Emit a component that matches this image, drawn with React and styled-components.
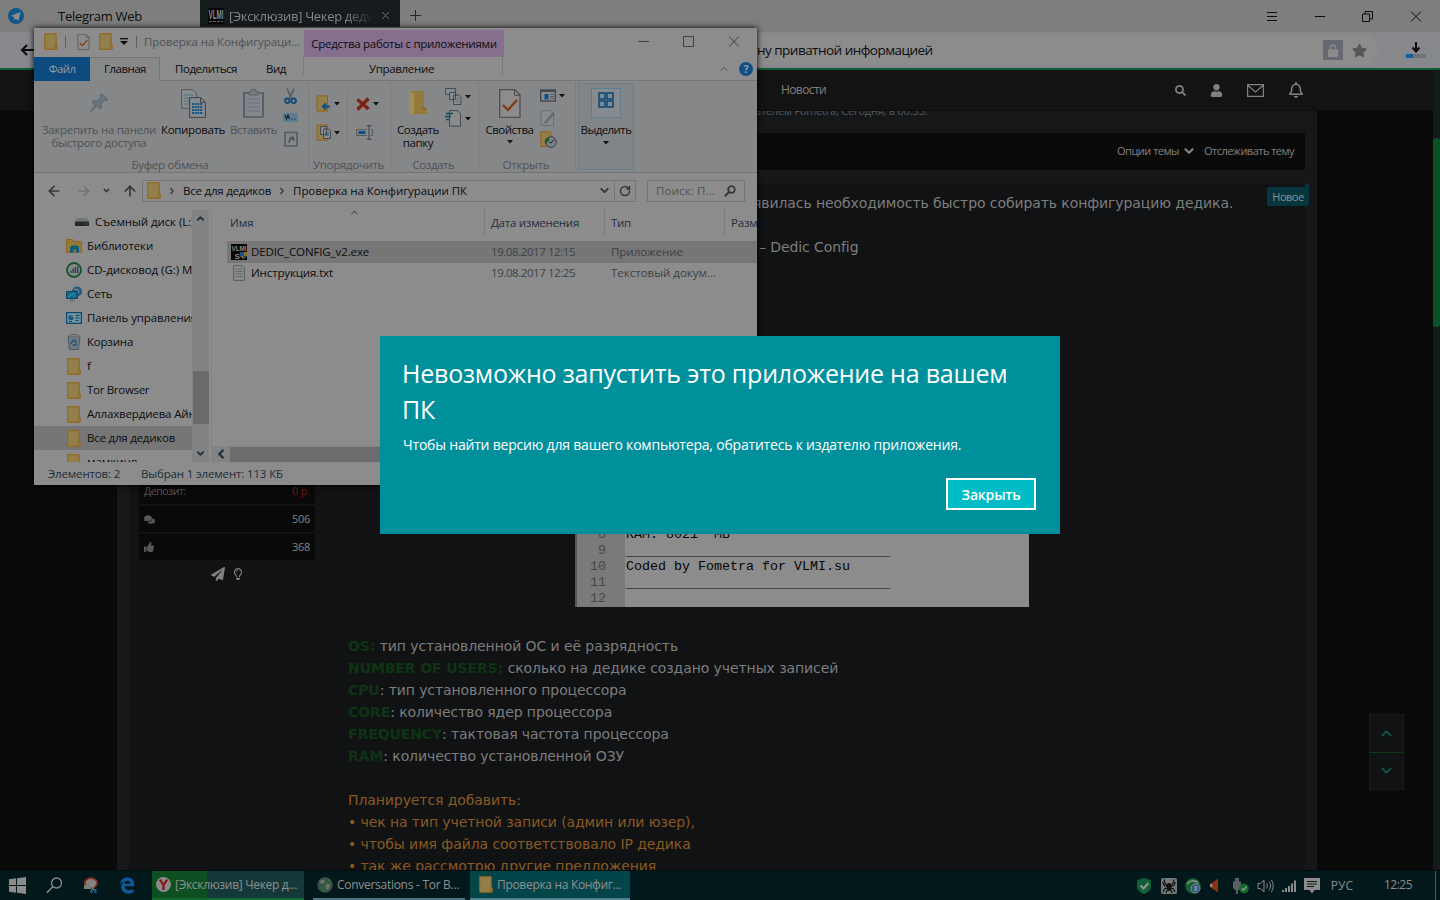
import React from "react";
import styled, { createGlobalStyle } from "styled-components";
import { FaComments, FaPaperPlane, FaRegBell, FaRegLightbulb, FaSearch, FaStar, FaThumbsUp, FaUser } from "react-icons/fa";
import { ArrowLeft, ArrowRight, ArrowUp, ChevronDown, ChevronLeft, ChevronRight, ChevronUp, Plus, RotateCw, X } from "lucide-react";

const GlobalStyle = createGlobalStyle`
  * {
    box-sizing: border-box;
  }
  body {
    margin: 0;
    background: #0a0a0a;
    font-family: "Open Sans", "Noto Sans", sans-serif;
    overflow: hidden;
  }
  svg {
    display: block;
    flex-shrink: 0;
  }
`;

const Desktop = styled.div`
  position: relative;
  width: 1440px;
  height: 900px;
  overflow: hidden;
  display: flex;
  flex-direction: column;
`;

const Text = styled.span`
  display: block;
  flex-shrink: 0;
  white-space: nowrap;
  font-size: ${(p) => p.$size || 11.5}px;
  line-height: ${(p) => p.$lh || 16}px;
  letter-spacing: ${(p) => p.$ls || 0}px;
  font-weight: ${(p) => p.$weight || 400};
  color: ${(p) => p.$color || "#0b0d0f"};
`;

/* ---------- browser ---------- */

const TabBar = styled.div`
  height: 32px;
  flex-shrink: 0;
  background: #7e7e7e;
  display: flex;
  align-items: flex-start;
`;

const PinnedTab = styled.div`
  width: 200px;
  height: 32px;
  display: flex;
  align-items: center;
  padding-left: 8px;
  gap: 34px;
`;

const ActiveTab = styled.div`
  width: 200px;
  height: 27px;
  background: #161b1d;
  border-bottom: 1px solid #1f2a35;
  display: flex;
  align-items: center;
  padding: 5px 8px 0;
  gap: 5px;
`;

const TabTitle = styled.div`
  width: 147px;
  overflow: hidden;
  mask-image: linear-gradient(to right, #000 80%, transparent);
`;

const NewTab = styled.div`
  padding: 7px 7px;
`;

const WindowButtons = styled.div`
  margin-left: auto;
  height: 32px;
  display: flex;
  align-items: center;
  gap: 32px;
  padding-right: 14px;
`;

const Toolbar = styled.div`
  height: 36px;
  flex-shrink: 0;
  background: #86888b;
  display: flex;
  align-items: center;
  padding: 0 14px 0 20px;
`;

const Address = styled.div`
  margin-left: 22px;
  width: 1324px;
  height: 30px;
  background: #8c8c8c;
  display: flex;
  align-items: center;
  justify-content: flex-end;
  clip-path: polygon(0 0, 99.3% 0, 100% 50%, 99.3% 100%, 0 100%);
  padding-right: 13px;
`;

const AddressText = styled.div`
  width: 566px;
`;

const Lock = styled.div`
  width: 20px;
  height: 20px;
  background: #666a70;
  display: flex;
  align-items: center;
  justify-content: center;
  margin-right: 9px;
`;

const Download = styled.div`
  margin-left: auto;
`;

const Page = styled.div`
  flex: 1;
  display: flex;
  border-top: 2px solid #0d5c33;
  overflow: hidden;
`;

const PageMain = styled.div`
  width: 1433px;
  display: flex;
  flex-direction: column;
`;

const PageScroll = styled.div`
  width: 7px;
  background: #14191b;
  padding-top: 68px;
`;

const PageThumb = styled.div`
  height: 189px;
  border-radius: 3px;
  background: #0b5229;
`;

const SiteHeader = styled.div`
  height: 41px;
  flex-shrink: 0;
  background: #131313;
  border-bottom: 1px solid #0d0d0d;
  display: flex;
  align-items: center;
  padding: 0 129px 0 781px;
`;

const HeaderIcons = styled.div`
  margin-left: auto;
  display: flex;
  align-items: center;
  gap: 24px;
  color: #808080;
`;

const Content = styled.div`
  width: 1200px;
  height: 800px;
  margin-left: 117px;
  padding: 0 12px;
  background: #161719;
  overflow: hidden;
`;

const SubTitle = styled.div`
  height: 22px;
  padding-left: 626px;
  margin-top: -8px;
  margin-bottom: 8px;
`;

const ThreadBar = styled.div`
  height: 37px;
  background: #0a0a0a;
  display: flex;
  align-items: center;
  justify-content: flex-end;
  gap: 3px;
  padding: 0 11px 2px 0;
`;

const Post = styled.div`
  margin-top: 12px;
  height: 720px;
  background: #111214;
  border-top: 1px solid #17191b;
  display: flex;
  padding-left: 10px;
`;

const UserColumn = styled.div`
  width: 176px;
  padding-top: 295px;
  display: flex;
  flex-direction: column;
  gap: 2px;
`;

const Stat = styled.div`
  height: 26px;
  flex-shrink: 0;
  background: #090909;
  display: flex;
  align-items: center;
  justify-content: space-between;
  padding: 0 5px;
  color: #55585a;
`;

const UserActions = styled.div`
  display: flex;
  align-items: center;
  gap: 7px;
  padding: 5px 0 0 72px;
  color: #808080;
`;

const Message = styled.div`
  width: 980px;
  padding: 9px 0 0 33px;
`;

const Line = styled.div`
  height: 22px;
  padding-left: ${(p) => p.$indent || 0}px;
  font-family: "DejaVu Sans", sans-serif;
  font-size: 14px;
  line-height: 22px;
  letter-spacing: -0.09px;
  white-space: nowrap;
  color: ${(p) => p.$color || "#7d7d7d"};

  b {
    color: #0e3513;
  }
`;

const Editor = styled.div`
  width: 454px;
  height: 81px;
  margin: 268px 0 28px 227px;
  padding-top: 1px;
  background: linear-gradient(to right, #555 0 2px, #7a7a7a 2px 50px, #8c8c8c 50px);
  overflow: hidden;
`;

const CodeRow = styled.div`
  display: flex;
  height: 16px;
  font: 13.33px/16px "Liberation Mono", monospace;
  white-space: pre;
  color: #050505;
`;

const LineNo = styled.span`
  width: 51px;
  padding-right: 20px;
  text-align: right;
  color: #484848;
`;

const CodeRule = styled.b`
  padding-top: 1px;
`;

const NewBadge = styled.div`
  position: absolute;
  left: 1267px;
  top: 187px;
  width: 42px;
  height: 19px;
  background: #07363f;
  border-radius: 2px 0 2px 2px;
  display: flex;
  align-items: center;
  justify-content: center;

  &::before {
    content: "";
    position: absolute;
    right: 0;
    top: -3px;
    width: 4px;
    height: 3px;
    background: #06323a;
  }
`;

const ScrollJump = styled.div`
  position: absolute;
  left: 1369px;
  top: 714px;
  width: 35px;
  height: 76px;
  background: #111213;
  border: 1px solid #171c1e;
  display: flex;
  flex-direction: column;
  color: #13534f;

  div {
    flex: 1;
    display: flex;
    align-items: center;
    justify-content: center;
  }
  div + div {
    border-top: 1px solid #0d3b16;
  }
`;

/* ---------- explorer ---------- */

const Explorer = styled.div`
  position: absolute;
  left: 34px;
  top: 28px;
  width: 723px;
  height: 457px;
  background: #8c8c8c;
  overflow: hidden;
  display: flex;
  flex-direction: column;
  box-shadow: 0 0 6px #000;
`;

const TitleRow = styled.div`
  height: 29px;
  flex-shrink: 0;
  display: flex;
  align-items: center;
  padding: 0 0 2px 10px;
`;

const Divider = styled.div`
  width: 1px;
  height: 12px;
  background: #5f5f5f;
  margin: 0 ${(p) => p.$right}px 0 ${(p) => p.$left}px;
`;

const Spacer = styled.div`
  width: ${(p) => p.$w}px;
  flex-shrink: 0;
`;

const TitleText = styled.div`
  width: 160px;
`;

const ToolsTab = styled.div`
  width: 200px;
  height: 27px;
  margin-bottom: -2px;
  align-self: flex-end;
  background: #866e8e;
  display: flex;
  align-items: center;
  justify-content: center;
`;

const Controls = styled.div`
  margin-left: auto;
  display: flex;
  align-items: center;
  gap: 34px;
  padding-right: 17px;
`;

const RibbonTabs = styled.div`
  height: 24px;
  flex-shrink: 0;
  display: flex;
  border-bottom: 1px solid #747576;
`;

const RibbonTab = styled.div`
  width: ${(p) => p.$w}px;
  height: 24px;
  flex-shrink: 0;
  display: flex;
  align-items: center;
  justify-content: center;
  background: ${(p) => (p.$file ? "#0d4a80" : p.$active ? "#87888a" : "transparent")};
  border: 1px solid transparent;
  border-color: ${(p) => (p.$active ? "#747576 #747576 transparent transparent" : "transparent")};
`;

const ToolsSubTab = styled(RibbonTab)`
  margin-left: 3px;
  height: 18px;
  padding: 6px 3px 0 0;
  border-color: transparent #7b777d;
`;

const RibbonHelp = styled.div`
  margin-left: auto;
  display: flex;
  align-items: center;
  gap: 9px;
  padding-right: 4px;
`;

const Ribbon = styled.div`
  height: 92px;
  flex-shrink: 0;
  display: flex;
  padding-top: 2px;
  background: #868789;
  border-bottom: 1px solid #737475;
`;

const Group = styled.div`
  width: ${(p) => p.$w}px;
  height: 86px;
  flex-shrink: 0;
  display: flex;
  flex-direction: column;
  border-right: 1px solid #7a7b7d;
`;

const GroupBody = styled.div`
  height: 72px;
  flex-shrink: 0;
  display: flex;
`;

const GroupLabel = styled.div`
  display: flex;
  justify-content: center;
  padding: 2px 2px 0 0;
`;

const BigButton = styled.div`
  width: ${(p) => p.$w}px;
  flex-shrink: 0;
  display: flex;
  flex-direction: column;
  align-items: center;
`;

const BigIcon = styled.div`
  height: 40px;
  display: flex;
  align-items: center;
`;

const Column = styled.div`
  width: ${(p) => p.$w}px;
  flex-shrink: 0;
  padding-top: ${(p) => p.$top || 3}px;
  display: flex;
  flex-direction: column;
  align-items: ${(p) => (p.$start ? "flex-start" : "center")};
  gap: ${(p) => p.$gap || 3}px;
`;

const IconDrop = styled.div`
  height: 19px;
  display: flex;
  align-items: center;
  gap: 3px;
`;

const InnerLine = styled.div`
  width: 1px;
  height: 54px;
  margin-top: 7px;
  background: #7a7b7d;
`;

const SelectGroup = styled.div`
  width: 56px;
  height: 87px;
  margin-left: 2px;
  background: #828588;
  border: 1px solid #6d7e88;
  display: flex;
  flex-direction: column;
  align-items: center;
`;

const SelectTile = styled.div`
  width: 30px;
  height: 30px;
  margin: 4px 0;
  padding-top: 3px;
  border: 1px solid #5e7f90;
  background: #878b8d;
  display: flex;
  justify-content: center;
`;

const NavRow = styled.div`
  height: 37px;
  flex-shrink: 0;
  display: flex;
  align-items: center;
  padding: 0 0 2px 12px;
  color: #35383b;
`;

const NavArrows = styled.div`
  width: 96px;
  display: flex;
  align-items: center;
`;

const Box = styled.div`
  width: ${(p) => p.$w}px;
  height: 22px;
  border: 1px solid #757575;
  display: flex;
  align-items: center;
  padding-left: ${(p) => p.$pad}px;
  margin-right: ${(p) => p.$mr || 0}px;
`;

const Crumb = styled.div`
  display: flex;
  align-items: center;
  gap: 6px;
  margin-left: 6px;
`;

const BoxEnd = styled.div`
  margin-left: auto;
`;

const RefreshBox = styled.div`
  width: 21px;
  height: 20px;
  margin-left: 3px;
  border-left: 1px solid #757575;
  display: flex;
  align-items: center;
  justify-content: center;
`;

const Body = styled.div`
  height: 252px;
  flex-shrink: 0;
  display: flex;
`;

const Tree = styled.div`
  width: 158px;
  overflow: hidden;
`;

const TreeRow = styled.div`
  height: 24px;
  display: flex;
  align-items: center;
  padding-left: ${(p) => p.$pad || 32}px;
  gap: ${(p) => p.$gap || 5}px;
  background: ${(p) => (p.$selected ? "#767676" : "transparent")};
`;

const VScroll = styled.div`
  width: 17px;
  background: #828384;
  display: flex;
  flex-direction: column;
  align-items: center;
  justify-content: space-between;
  padding: 3px 0;
  color: #22303a;
`;

const VThumb = styled.div`
  width: 16px;
  height: 53px;
  margin-top: 123px;
  background: #696a6b;
`;

const Files = styled.div`
  flex: 1;
  margin-left: 2px;
  border-left: 1px solid #858585;
  display: flex;
  flex-direction: column;
  overflow: hidden;
`;

const Columns = styled.div`
  flex-shrink: 0;
  height: ${(p) => p.$h}px;
  margin-left: 15px;
  margin-bottom: ${(p) => p.$mb || 0}px;
  display: grid;
  grid-template-columns: 258px 120px 120px 33px;
  align-items: center;
  background: ${(p) => (p.$selected ? "#767676" : "transparent")};
`;

const Cell = styled.div`
  display: flex;
  align-items: center;
  gap: ${(p) => p.$gap || 4}px;
  padding-left: ${(p) => p.$pad || 6}px;
  height: 100%;
  border-right: ${(p) => (p.$line ? "1px solid #7b7b7b" : "none")};
  overflow: hidden;
`;

const SortMark = styled.div`
  position: absolute;
  left: 315px;
  top: 179px;
  color: #4b5257;
`;

const HScroll = styled.div`
  margin-top: auto;
  height: 16px;
  background: #828384;
  display: flex;
  align-items: center;
  padding-left: 2px;
  color: #22303a;
`;

const HThumb = styled.div`
  flex: 1;
  height: 15px;
  margin-left: 2px;
  background: #6b6c6d;
`;

const Status = styled.div`
  flex: 1;
  display: flex;
  align-items: center;
  padding-left: 14px;
  gap: 21px;
`;

/* ---------- dialog ---------- */

const Dialog = styled.div`
  position: absolute;
  left: 380px;
  top: 336px;
  width: 680px;
  height: 198px;
  padding: 19px 24px 24px 22px;
  background: #00909c;
  display: flex;
  flex-direction: column;
`;

const DialogTitle = styled.div`
  font-size: 25px;
  line-height: 36px;
  letter-spacing: -0.22px;
  color: #fff;
`;

const DialogBody = styled(Text)`
  padding-left: 1px;
`;

const CloseButton = styled.button`
  width: 90px;
  height: 32px;
  padding: 1px 0 0;
  margin-top: auto;
  align-self: flex-end;
  background: #00bcc7;
  border: 2px solid #fff;
  font: 600 14px/20px "Open Sans", sans-serif;
  letter-spacing: -0.18px;
  color: #fff;
`;

/* ---------- taskbar ---------- */

const Taskbar = styled.div`
  position: absolute;
  left: 0;
  right: 0;
  bottom: 0;
  height: 30px;
  background: #02181b;
  border-top: 1px solid #010d0f;
  display: flex;
  align-items: center;
`;

const Launchers = styled.div`
  width: 152px;
  display: flex;
  align-items: center;
  gap: 20px;
  padding-left: 9px;
`;

const Task = styled.div`
  width: ${(p) => p.$w}px;
  height: 29px;
  margin-right: ${(p) => p.$mr || 0}px;
  background: ${(p) => p.$bg || "transparent"};
  border-bottom: 2px solid ${(p) => p.$line};
  display: flex;
  align-items: center;
  gap: 4px;
  padding-left: ${(p) => p.$pad || 4}px;
`;

const Tray = styled.div`
  margin-left: auto;
  display: flex;
  align-items: center;
  gap: 8px;
  height: 29px;
`;

const Clock = styled.div`
  margin: 0 15px 0 23px;
  padding-bottom: 2px;
`;

const ShowDesktop = styled.div`
  width: 5px;
  height: 29px;
  border-left: 1px solid #4c5c5e;
`;

/* ---------- icons ---------- */

const Folder = () => (
  <svg width="14" height="17" viewBox="0 0 14 17">
    <path d="M.7.700h11.500v10.800h1v4.800H.7z" fill="#927f4a" stroke="#94631d" />
    <path d="M11 16v-4.500h1.500" fill="none" stroke="#94631d" />
  </svg>
);

const Drop = () => (
  <svg width="6" height="4" viewBox="0 0 6 4"><path d="M0 0h6L3 3.5z" fill="#101214" /></svg>
);

const CheckSheet = ({ w, h }) => (
  <svg width={w} height={h} viewBox="0 0 22 29">
    <path d="M.7.7h15L21 6v22.300H.7z" fill="#8c8c8c" stroke="#4c4f52" strokeWidth="1.3" />
    <path d="M15.500 1v5.300H21" fill="none" stroke="#4c4f52" />
    <path d="M4 16l5 5 9-10" fill="none" stroke="#85370f" strokeWidth="2.200" />
  </svg>
);

const Telegram = () => (
  <svg width="16" height="16" viewBox="0 0 16 16">
    <circle cx="8" cy="8" r="8" fill="#12568a" />
    <path d="M3.300 7.800l9.200-3.700-2 8.600-2.600-2-1.500 1.500-.3-2.600z" fill="#8b8f92" />
  </svg>
);

const Vlmi = ({ shield }) => (
  <svg width="16" height="16" viewBox="0 0 16 16">
    <rect width="16" height="16" fill="#050505" />
    <text x="8" y={shield ? 6.5 : 11} textAnchor="middle" fontSize={shield ? 7 : 13} fontWeight="700" fontFamily="Liberation Sans" textLength="15" lengthAdjust="spacingAndGlyphs" fill="#8c8c8c">VLMI</text>
    {shield ? (
      <>
        <text x="3.500" y="14.500" fontSize="8" fontWeight="700" fontFamily="Liberation Sans" fill="#8c8c8c">S</text>
        <path d="M9 8h3.500v4H9z" fill="#165489" /><path d="M12.500 8H16v4h-3.500z" fill="#8f6f20" />
        <path d="M9 12h3.500v3.500z" fill="#8f6f20" /><path d="M12.500 12H16l-3.500 3.500z" fill="#165489" />
      </>
    ) : (
      <path d="M1 13.500h14" stroke="#666" strokeDasharray="3 1" />
    )}
  </svg>
);

const Pin = () => (
  <svg width="22" height="22" viewBox="0 0 22 22">
    <path d="M13.500 1.500l6.500 6-2 1.300-1.800-.3-3.200 4 .5 3.500-1.800 1-3-3.300L2 20.500l5-7.300-3-3 1.300-1.500 3.500.3 3.700-3.500-.2-2.500z" fill="#68747d" stroke="#566069" strokeWidth=".8" />
  </svg>
);

const CopyBig = () => (
  <svg width="25" height="29" viewBox="0 0 25 29">
    <path d="M.6.6h11l4 4v14.800H.6z" fill="#898c8e" stroke="#54585b" />
    <path d="M3 6h9M3 9h9M3 12h9M3 15h6" stroke="#4f7489" />
    <path d="M8.600 8.600h11l4.800 4.500v15.300H8.600z" fill="#898c8e" stroke="#3c4247" />
    <path d="M19.500 9v4.300h4.500" fill="none" stroke="#3c4247" />
    <path d="M11 15h11M11 18h11M11 21h11M11 24h11" stroke="#12568a" strokeWidth="1.800" strokeDasharray="2 .7" />
  </svg>
);

const Clipboard = () => (
  <svg width="21" height="29" viewBox="0 0 21 29">
    <path d="M1 4h19v24H1z" fill="#84888d" stroke="#525a61" strokeWidth="1.700" />
    <path d="M6 2.500h2.500V.5h4v2H15v3.500H6z" fill="#777c80" stroke="#596066" />
    <path d="M4 10h13M4 14h13M4 18h13M4 22h13" stroke="#66717f" />
  </svg>
);

const PasteLink = () => (
  <svg width="14" height="17" viewBox="0 0 14 17">
    <path d="M1 2.500h12v13.500H1z" fill="#84888d" stroke="#54585c" strokeWidth="1.500" />
    <path d="M4 1h6v3H4z" fill="#6a6f73" />
    <path d="M5 13c0-3 1-4.500 4-5M6 7.500h3.500V11" fill="none" stroke="#4a4f54" strokeWidth="1.400" />
  </svg>
);

const Scissors = () => (
  <svg width="13" height="17" viewBox="0 0 13 17">
    <path d="M3 .5l4.500 10M10 .5l-4.500 10" stroke="#53585c" strokeWidth="1.500" />
    <circle cx="3.300" cy="12.800" r="2.300" fill="none" stroke="#0d4b7c" strokeWidth="1.800" />
    <circle cx="9.700" cy="12.800" r="2.300" fill="none" stroke="#0d4b7c" strokeWidth="1.800" />
  </svg>
);

const PathIcon = () => (
  <svg width="15" height="9" viewBox="0 0 15 9">
    <rect width="15" height="9" fill="#5b7f90" />
    <path d="M2 2l1.500 4L5 2l1.500 4M8.500 6h1.200M11.500 6h1.200" fill="none" stroke="#15222c" strokeWidth="1.200" />
  </svg>
);

const FolderMove = () => (
  <svg width="15" height="17" viewBox="0 0 15 17">
    <path d="M1 .8h10.500v15.400H1z" fill="#927f4a" stroke="#94631d" />
    <path d="M14 11.500H7.500M10 8.500l-3.200 3 3.200 3" fill="none" stroke="#0d4f8a" strokeWidth="2" />
  </svg>
);

const FolderCopy = () => (
  <svg width="15" height="17" viewBox="0 0 15 17">
    <path d="M1 .8h10.500v15.400H1z" fill="#927f4a" stroke="#94631d" />
    <path d="M4.500 2.500h6v8h-6zM7.500 5h5l2 2v7.500h-7z" fill="#8a8c8e" stroke="#45494d" />
    <path d="M9 9h4M9 11h4" stroke="#12568a" />
  </svg>
);

const RedCross = () => (
  <svg width="14" height="14" viewBox="0 0 14 14">
    <path d="M1.500 2.500l11 9.500M12.500 1.500l-11 11" stroke="#7d2215" strokeWidth="3.400" />
  </svg>
);

const Rename = () => (
  <svg width="17" height="15" viewBox="0 0 17 15">
    <path d="M11 4.500H.6v6H11M14.500 4.500h2v6h-2" fill="none" stroke="#54585b" />
    <path d="M2.500 6h7v3h-7z" fill="#0d4f8a" />
    <path d="M10.500.7h5M13 .7v13.600M10.500 14.300h5" stroke="#3c4247" />
  </svg>
);

const NewFolder = () => (
  <svg width="20" height="28" viewBox="0 0 20 28">
    <path d="M1 2h15v16l3 1.500V25H5v2.500L1 24z" fill="#94793c" />
    <path d="M1 2l5 3v22.500L1 24z" fill="#a08f5b" />
    <path d="M14 18l4 2" stroke="#7a5a22" />
  </svg>
);

const NewItem = () => (
  <svg width="17" height="17" viewBox="0 0 17 17">
    <path d="M.6.6h10v6H.6z" fill="#80909a" stroke="#45494d" />
    <path d="M4.500 4.500h6v7h-6zM8.500 7h5l2.500 2.500v7H8.500z" fill="#898b8d" stroke="#45494d" />
    <path d="M10.500 11h4M10.500 13.500h4" stroke="#4f7489" />
  </svg>
);

const EasyAccess = () => (
  <svg width="17" height="17" viewBox="0 0 17 17">
    <path d="M4.500.6h8l3 3v12.600h-11z" fill="#898b8d" stroke="#45494d" />
    <path d="M1 3.500h7M0 6.500h6M1 9.500h3" stroke="#0f4a56" strokeWidth="1.400" />
  </svg>
);

const OpenIcon = () => (
  <svg width="16" height="13" viewBox="0 0 16 13">
    <path d="M.7 1h14.600v11H.7z" fill="#8a8c8e" stroke="#45494d" strokeWidth="1.400" />
    <path d="M.7 2h14.600" stroke="#45494d" strokeWidth="2" />
    <path d="M4.500 5h4v5.500h-4z" fill="#0d4f8a" />
    <path d="M10 5.500h4M10 7.500h4M10 9.500h4" stroke="#54585b" />
  </svg>
);

const EditIcon = () => (
  <svg width="15" height="16" viewBox="0 0 15 16">
    <path d="M1 .6h9L13.500 4v11.400H1z" fill="#868b90" stroke="#666e75" />
    <path d="M5 13L14 3" stroke="#5b6871" strokeWidth="2.200" />
  </svg>
);

const History = () => (
  <svg width="17" height="17" viewBox="0 0 17 17">
    <path d="M.8.8h10v14.500H.8z" fill="#927f4a" stroke="#94631d" />
    <circle cx="11" cy="11" r="5.300" fill="#7b8186" stroke="#3c4247" />
    <path d="M5 13a6 6 0 0 1 3.500-7l1 3z" fill="#15592d" />
    <path d="M9 11l2 1 3-3.500" fill="none" stroke="#24282b" />
  </svg>
);

const SelectAll = () => (
  <svg width="16" height="16" viewBox="0 0 16 16">
    <path d="M1 1h6v6H1zM9 1h6v6H9zM1 9h6v6H1zM9 9h6v6H9z" fill="#7b8b95" stroke="#0d4573" strokeWidth="1.500" />
  </svg>
);

const Drive = () => (
  <svg width="14" height="8" viewBox="0 0 14 8">
    <path d="M2 0h10l2 3.500H0z" fill="#74777a" />
    <path d="M0 3.500h14V8H0z" fill="#24282c" />
    <path d="M10 6h2" stroke="#218046" />
  </svg>
);

const Libraries = () => (
  <svg width="16" height="14" viewBox="0 0 16 14">
    <path d="M.5.500h6l1 2h8v11H.5z" fill="#937a38" stroke="#94631d" />
    <path d="M4 13.500V9.500a3 3 0 0 1 3-3h3a3 3 0 0 1 3 3v4h-3v-3H7.500v3z" fill="#0c5d80" />
  </svg>
);

const Disc = () => (
  <svg width="16" height="16" viewBox="0 0 16 16">
    <circle cx="8" cy="8" r="7" fill="#858a88" stroke="#16532c" strokeWidth="1.800" />
    <path d="M5 11V8.500M7.200 11V6.500M9.400 11V5M11.600 11V4.500" stroke="#26425c" strokeWidth="1.400" />
  </svg>
);

const Network = () => (
  <svg width="16" height="16" viewBox="0 0 16 16">
    <circle cx="11" cy="5.500" r="5" fill="#285877" />
    <path d="M8 3l4 1 1 3" stroke="#7c979f" fill="none" />
    <path d="M.5 5.500h11v7H.5z" fill="#126c92" stroke="#0b455f" />
    <path d="M2 11l6-4" stroke="#5a93a5" />
    <path d="M4 15h5M6 13v2" stroke="#62686b" />
  </svg>
);

const Panel = () => (
  <svg width="16" height="12" viewBox="0 0 16 12">
    <path d="M.6.6h14.800v10.800H.6z" fill="#6f96a4" stroke="#0d4a6e" strokeWidth="1.300" />
    <circle cx="5" cy="5.500" r="2.600" fill="#12568a" />
    <path d="M5 5.500V2.900a2.600 2.600 0 0 1 2.600 2.600z" fill="#93701e" />
    <path d="M9.500 3.500h4M9.500 6h4M3 9.500h3M9.500 8.500h3" stroke="#123f60" strokeWidth="1.200" />
  </svg>
);

const Bin = () => (
  <svg width="14" height="16" viewBox="0 0 14 16">
    <path d="M1 2.500h12L11.500 15.500h-9z" fill="#73787c" stroke="#53585c" />
    <path d="M1 2.500l3-2h6l3 2" fill="#808487" stroke="#62676b" />
    <path d="M7 5.500l2.500 3.500M10 11H5.500M4 10l2-4" stroke="#12568a" strokeWidth="1.600" />
  </svg>
);

const TextFile = () => (
  <svg width="12" height="16" viewBox="0 0 12 16">
    <path d="M.6.6H9l2.400 2.400v12.400H.6z" fill="#8a8b8c" stroke="#5b5e60" />
    <path d="M2.500 4h7M2.500 6.500h7M2.500 9h7M2.500 11.500h7" stroke="#5f6a73" />
  </svg>
);

const Windows = () => (
  <svg width="17" height="17" viewBox="0 0 17 17">
    <path d="M0 2.300l7-1V8H0zM8 1.200L17 0v8H8zM0 9h7v6.700l-7-1zM8 9h9v8l-9-1.300z" fill="#8c8c8c" />
  </svg>
);

const TaskSearch = () => (
  <svg width="17" height="17" viewBox="0 0 17 17">
    <circle cx="10.500" cy="6" r="5" fill="none" stroke="#8c8c8c" strokeWidth="1.300" />
    <path d="M6.800 9.700L.8 15.700" stroke="#8c8c8c" strokeWidth="1.500" />
  </svg>
);

const Snip = () => (
  <svg width="16" height="17" viewBox="0 0 16 17">
    <ellipse cx="8" cy="6" rx="6.300" ry="4.800" fill="#85807e" stroke="#812a1c" strokeWidth="1.800" />
    <path d="M1 8h7v4H1z" fill="#7c7c7c" />
    <path d="M8 6l3 8M12 7l-4 7" stroke="#8c8c8c" />
    <path d="M8.500 13v3M12.500 12v4" stroke="#13609b" strokeWidth="2" />
  </svg>
);

const Edge = () => (
  <svg width="16" height="17" viewBox="0 0 16 17">
    <path d="M.8 7.500C1.500 2.800 4.800.5 8.500.5c4.500 0 6.700 3.200 6.700 7v1.800H5.500c.2 2.600 2.200 3.900 4.700 3.900 1.700 0 3.200-.5 4.300-1.200v3.300c-1.300.8-3 1.200-5 1.200-4.500 0-7.300-2.600-7.300-6.500 0-2.600 1.500-4.700 3.700-5.800C3.500 4.800 1.800 5.900.8 7.500zM5.500 6.800h5.800c0-1.900-1-3-2.700-3S5.700 5 5.500 6.800z" fill="#105a9a" />
  </svg>
);

const Yandex = () => (
  <svg width="15" height="15" viewBox="0 0 15 15">
    <circle cx="7.500" cy="7.500" r="7.500" fill="#8b8b8b" />
    <path d="M3.800 2.500l3.700 5.500 3.700-5.500M7.500 7.500v5.500" fill="none" stroke="#851515" strokeWidth="2.200" />
  </svg>
);

const TorGlobe = () => (
  <svg width="16" height="16" viewBox="0 0 16 16">
    <circle cx="8" cy="8" r="7.700" fill="#3b5145" />
    <path d="M3 4c2-2 4-1 5 0s-2 3-3 3-2-1-2-3zM9 7c2-1 4 0 4 2s-2 4-3 4-2-4-1-6z" fill="#65755f" />
    <path d="M4 10l3 4M11 2l2 3" stroke="#1f7a35" strokeWidth="1.500" />
  </svg>
);

const ShieldOk = () => (
  <svg width="16" height="16" viewBox="0 0 16 16">
    <path d="M0 2l7-2 7 2v6c0 4-3 6.500-7 8-4-1.500-7-4-7-8z" fill="#155f38" />
    <path d="M3.500 7.500l3 3 5-5.500" fill="none" stroke="#8c9a90" strokeWidth="2" />
  </svg>
);

const Spider = () => (
  <svg width="16" height="16" viewBox="0 0 16 16">
    <rect width="16" height="16" rx="2" fill="#747879" />
    <ellipse cx="8" cy="9" rx="2.500" ry="4" fill="#0d1112" />
    <path d="M3 1.500l1 4 4 3 4-3 1-4M1.500 4l2 4h9l2-4M2 14l1.500-3L8 9.500l4.500 1.500 1.500 3M5 15l1-3M11 15l-1-3" fill="none" stroke="#0d1112" strokeWidth="1.200" />
  </svg>
);

const Globe8 = () => (
  <svg width="16" height="16" viewBox="0 0 16 16">
    <circle cx="8" cy="8" r="7.800" fill="#17612f" />
    <path d="M2 6c3-4 8-4 11-1" stroke="#768b80" strokeWidth="2" fill="none" />
    <circle cx="10.500" cy="10.500" r="4.500" fill="#26548a" stroke="#8a8f92" />
    <text x="8.500" y="13.300" fontSize="7" fontWeight="700" fontFamily="Liberation Sans" fill="#9a9a9a">8</text>
  </svg>
);

const RedHorn = () => (
  <svg width="16" height="15" viewBox="0 0 16 15">
    <path d="M1 6l8-5.500v14L1 9z" fill="#8e2f12" />
    <path d="M1 6h2.500v3H1z" fill="#888" />
  </svg>
);

const Usb = () => (
  <svg width="16" height="16" viewBox="0 0 16 16">
    <path d="M2 0h4v3.500H2zM0 3.500h8V10L6 12H2L0 10z" fill="#5b6163" />
    <path d="M4 12v4" stroke="#5b6163" strokeWidth="2" />
    <circle cx="11" cy="10.500" r="4.800" fill="#166a2c" />
    <path d="M8.800 10.500l1.700 1.700 3-3.700" fill="none" stroke="#8d988f" strokeWidth="1.300" />
  </svg>
);

const Volume = () => (
  <svg width="17" height="14" viewBox="0 0 17 14">
    <path d="M1 4.500h2.500l3.500-3.300v11.600L3.500 9.500H1z" fill="none" stroke="#8c8c8c" />
    <path d="M9.500 4.500c1 1.500 1 3.500 0 5M12 2.500c2 3 2 6 0 9M14.300.8c2.500 4 2.500 8.400 0 12.400" fill="none" stroke="#8c8c8c" />
  </svg>
);

const Signal = () => (
  <svg width="14" height="12" viewBox="0 0 14 12">
    <path d="M1 12v-2M4 12V8M7 12V6M10 12V3.500M13 12V.5" stroke="#8c8c8c" strokeWidth="2" />
  </svg>
);

const Notice = () => (
  <svg width="16" height="16" viewBox="0 0 16 16">
    <path d="M0 0h16v12h-5.500L8 15.500 5.500 12H0z" fill="#8c8c8c" />
    <path d="M3 3.500h10M3 6h10M3 8.500h7" stroke="#02181b" />
  </svg>
);

/* ---------- data ---------- */

const tree = [
  { name: "Библиотеки", icon: <Libraries />, ls: -0.1 },
  { name: "CD-дисковод (G:) MegaFon", icon: <Disc />, ls: -0.05 },
  { name: "Сеть", icon: <Network />, ls: -0.1 },
  { name: "Панель управления", icon: <Panel />, ls: -0.1 },
  { name: "Корзина", icon: <Bin />, ls: -0.2, pad: 33, gap: 6 },
  { name: "f", folder: true },
  { name: "Tor Browser", folder: true, ls: -0.3 },
  { name: "Аллахвердиева Айнур", folder: true, ls: -0.15 },
  { name: "Все для дедиков", folder: true, ls: -0.22, selected: true },
  { name: "мамкино", folder: true },
];

const specs = [
  ["OS:", " тип установленной ОС и её разрядность"],
  ["NUMBER OF USERS:", " сколько на дедике создано учетных записей"],
  ["CPU", ": тип установленного процессора"],
  ["CORE", ": количество ядер процессора"],
  ["FREQUENCY", ": тактовая частота процессора"],
  ["RAM", ": количество установленной ОЗУ"],
];

const plans = [
  "Планируется добавить:",
  "• чек на тип учетной записи (админ или юзер),",
  "• чтобы имя файла соответствовало IP дедика",
  "• так же рассмотрю другие предложения",
];

const rule = "_".repeat(33);
const code = [
  [8, "RAM: 8021  MB"],
  [9, rule],
  [10, "Coded by Fometra for VLMI.su"],
  [11, rule],
  [12, ""],
];

const muted = "#4e5255";

const BrowserWindow = () => (
  <>
    <TabBar>
      <PinnedTab>
        <Telegram />
        <Text $size={13} $ls={-0.28} $lh={18}>Telegram Web</Text>
      </PinnedTab>
      <ActiveTab>
        <Vlmi />
        <TabTitle>
          <Text $size={13} $ls={-0.32} $lh={18} $color="#858789">[Эксклюзив] Чекер дедика</Text>
        </TabTitle>
        <X size={13} strokeWidth={1.8} color="#6d747a" />
      </ActiveTab>
      <NewTab><Plus size={17} strokeWidth={1.4} color="#20262c" /></NewTab>
      <WindowButtons>
        <svg width="12" height="11"><path d="M1 1.500h10M1 5.500h10M1 9.500h10" stroke="#0c0c0c" /></svg>
        <svg width="20" height="11" viewBox="-5 0 20 11"><path d="M0 5.500h10" stroke="#0c0c0c" /></svg>
        <svg width="12" height="11" viewBox="0 0 12 11"><path d="M.5 3h7v7.500h-7zM3 3V.5h7.500V8H8" fill="none" stroke="#0c0c0c" /></svg>
        <svg width="20" height="11" viewBox="-5 0 20 11"><path d="M0 .500l10 10M10 .5l-10 10" stroke="#0c0c0c" /></svg>
      </WindowButtons>
    </TabBar>
    <Toolbar>
      <svg width="14" height="12" viewBox="0 0 14 12"><path d="M14 6H2M7 1L2 6l5 5" fill="none" stroke="#0a0a0a" strokeWidth="2" /></svg>
      <Address>
        <AddressText>
          <Text $size={13.5} $ls={-0.52} $lh={20}>ну приватной информацией</Text>
        </AddressText>
        <Lock>
          <svg width="10" height="13" viewBox="0 0 10 13"><path d="M0 5.500h10V13H0z" fill="#8b8b8b" /><path d="M2.500 6V3.500a2.500 2.500 0 0 1 5 0V6" fill="none" stroke="#8b8b8b" strokeWidth="1.300" /></svg>
        </Lock>
        <FaStar size={15} color="#53585d" />
      </Address>
      <Download>
        <svg width="20" height="17" viewBox="0 0 20 17"><path d="M10 0v8M6.500 5.500L10 9.500l3.500-4" fill="none" stroke="#0b0b0b" strokeWidth="2" /><path d="M0 12h7v4H0z" fill="#125f9c" /><path d="M7 12h13v4H7z" fill="#6c747b" /></svg>
      </Download>
    </Toolbar>
    <Page>
      <PageMain>
        <SiteHeader>
          <Text $size={12} $ls={-0.6} $color="#808080">Новости</Text>
          <HeaderIcons>
            <FaSearch size={11} />
            <FaUser size={13} />
            <svg width="17" height="13" viewBox="0 0 17 13"><path d="M.6.6h15.800v11.800H.6zM1 1.500l7.500 6.500L16 1.500" fill="none" stroke="currentColor" strokeWidth="1.200" /></svg>
            <FaRegBell size={16} />
          </HeaderIcons>
        </SiteHeader>
        <Content>
          <SubTitle>
            <Text $size={11} $ls={-0.22} $color="#55575a">ателем Fometra, Сегодня, в 00:35.</Text>
          </SubTitle>
          <ThreadBar>
            <Text $size={11} $ls={-0.5} $color="#808080">Опции темы</Text>
            <ChevronDown size={14} strokeWidth={4} color="#808080" />
            <Spacer $w={2} />
            <Text $size={11} $ls={-0.53} $color="#808080">Отслеживать тему</Text>
          </ThreadBar>
          <Post>
            <UserColumn>
              <Stat>
                <Text $size={10.5} $ls={-0.45} $color="#56585a">Депозит:</Text>
                <Text $size={10.5} $color="#731b17">0 р.</Text>
              </Stat>
              <Stat>
                <FaComments size={11} />
                <Text $size={11} $ls={-0.29} $color="#858585">506</Text>
              </Stat>
              <Stat>
                <FaThumbsUp size={10} />
                <Text $size={11} $ls={-0.29} $color="#858585">368</Text>
              </Stat>
              <UserActions>
                <FaPaperPlane size={14} />
                <FaRegLightbulb size={12} />
              </UserActions>
            </UserColumn>
            <Message>
              <Line $indent={405}>явилась необходимость быстро собирать конфигурацию дедика.</Line>
              <Line />
              <Line $indent={411}>– Dedic Config</Line>
              <Editor>
                {code.map(([no, text]) => (
                  <CodeRow key={no}>
                    <LineNo>{no}</LineNo>
                    {text === rule ? <CodeRule>{text}</CodeRule> : text}
                  </CodeRow>
                ))}
              </Editor>
              {specs.map(([key, text]) => (
                <Line key={key}><b>{key}</b>{text}</Line>
              ))}
              <Line />
              {plans.map((text) => (
                <Line key={text} $color="#8a5a22">{text}</Line>
              ))}
            </Message>
          </Post>
        </Content>
      </PageMain>
      <PageScroll><PageThumb /></PageScroll>
    </Page>
    <NewBadge><Text $size={11} $ls={-0.5} $color="#8b8f90">Новое</Text></NewBadge>
    <ScrollJump>
      <div><ChevronUp size={17} strokeWidth={2.5} /></div>
      <div><ChevronDown size={17} strokeWidth={2.5} /></div>
    </ScrollJump>
  </>
);

const ExplorerWindow = () => (
  <Explorer>
    <TitleRow>
      <Folder />
      <Divider $left={7} $right={11} />
      <CheckSheet w={13} h={16} />
      <Spacer $w={9} />
      <Folder />
      <Spacer $w={7} />
      <svg width="8" height="7" viewBox="0 0 8 7"><path d="M0 .7h8" stroke="#0c0c0c" strokeWidth="1.300" /><path d="M0 3h8L4 7z" fill="#0c0c0c" /></svg>
      <Divider $left={8} $right={7} />
      <TitleText><Text $ls={-0.11} $color={muted}>Проверка на Конфигураци...</Text></TitleText>
      <ToolsTab><Text $ls={-0.28}>Средства работы с приложениями</Text></ToolsTab>
      <Controls>
        <svg width="11" height="11"><path d="M0 5.500h11" stroke="#404040" /></svg>
        <svg width="11" height="11"><path d="M.5.500h10v10H.5z" fill="none" stroke="#404040" /></svg>
        <svg width="12" height="11"><path d="M1 .500l10 10M11 .5l-10 10" stroke="#404040" /></svg>
      </Controls>
    </TitleRow>
    <RibbonTabs>
      <RibbonTab $w={56} $file><Text $ls={-0.6} $color="#8f9aa3">Файл</Text></RibbonTab>
      <RibbonTab $w={70} $active><Text $ls={-0.52}>Главная</Text></RibbonTab>
      <RibbonTab $w={92}><Text $ls={-0.43}>Поделиться</Text></RibbonTab>
      <RibbonTab $w={48}><Text $ls={-0.45}>Вид</Text></RibbonTab>
      <ToolsSubTab $w={200}><Text $ls={-0.33}>Управление</Text></ToolsSubTab>
      <RibbonHelp>
        <ChevronUp size={12} color="#4b4f52" />
        <svg width="14" height="14" viewBox="0 0 14 14"><circle cx="7" cy="7" r="7" fill="#0e4f88" /><text x="7" y="11" textAnchor="middle" fontSize="11" fontWeight="700" fontFamily="Open Sans" fill="#8f9aa3">?</text></svg>
      </RibbonHelp>
    </RibbonTabs>
    <Ribbon>
      <Group $w={275}>
        <GroupBody>
          <BigButton $w={130}>
            <BigIcon><Pin /></BigIcon>
            <Text $lh={13} $ls={-0.31} $color={muted}>Закрепить на панели</Text>
            <Text $lh={13} $ls={-0.26} $color={muted}>быстрого доступа</Text>
          </BigButton>
          <BigButton $w={58}>
            <BigIcon><CopyBig /></BigIcon>
            <Text $lh={13} $ls={-0.35}>Копировать</Text>
          </BigButton>
          <BigButton $w={63}>
            <BigIcon><Clipboard /></BigIcon>
            <Text $lh={13} $ls={-0.48} $color={muted}>Вставить</Text>
          </BigButton>
          <Column $w={11} $top={5} $gap={8}>
            <Scissors />
            <PathIcon />
            <PasteLink />
          </Column>
        </GroupBody>
        <GroupLabel><Text $ls={-0.23} $color={muted}>Буфер обмена</Text></GroupLabel>
      </Group>
      <Group $w={82}>
        <GroupBody>
          <Column $w={38} $top={11} $gap={10}>
            <IconDrop><FolderMove /><Drop /></IconDrop>
            <IconDrop><FolderCopy /><Drop /></IconDrop>
          </Column>
          <InnerLine />
          <Column $w={39} $top={11} $gap={10}>
            <IconDrop><RedCross /><Drop /></IconDrop>
            <IconDrop><Rename /><Spacer $w={4} /></IconDrop>
          </Column>
        </GroupBody>
        <GroupLabel><Text $ls={-0.32} $color={muted}>Упорядочить</Text></GroupLabel>
      </Group>
      <Group $w={88}>
        <GroupBody>
          <BigButton $w={54}>
            <BigIcon><NewFolder /></BigIcon>
            <Text $lh={13} $ls={-0.42}>Создать</Text>
            <Text $lh={13} $ls={-0.42}>папку</Text>
          </BigButton>
          <Column $w={25} $top={4} $gap={3}>
            <IconDrop><NewItem /><Drop /></IconDrop>
            <IconDrop><EasyAccess /><Drop /></IconDrop>
          </Column>
        </GroupBody>
        <GroupLabel><Text $ls={-0.42} $color={muted}>Создать</Text></GroupLabel>
      </Group>
      <Group $w={97}>
        <GroupBody>
          <BigButton $w={61}>
            <BigIcon><CheckSheet w={22} h={29} /></BigIcon>
            <Text $lh={13} $ls={-0.5}>Свойства</Text>
            <Column $w={6} $top={4}><Drop /></Column>
          </BigButton>
          <Column $w={34} $start $gap={3}>
            <IconDrop><OpenIcon /><Drop /></IconDrop>
            <IconDrop><EditIcon /></IconDrop>
            <IconDrop><History /></IconDrop>
          </Column>
        </GroupBody>
        <GroupLabel><Text $ls={-0.23} $color={muted}>Открыть</Text></GroupLabel>
      </Group>
      <SelectGroup>
        <SelectTile><SelectAll /></SelectTile>
        <Text $lh={15} $ls={-0.58}>Выделить</Text>
        <Column $w={6} $top={4}><Drop /></Column>
      </SelectGroup>
    </Ribbon>
    <NavRow>
      <NavArrows>
        <ArrowLeft size={16} strokeWidth={2.5} />
        <Spacer $w={14} />
        <ArrowRight size={16} strokeWidth={2} color="#707172" />
        <Spacer $w={10} />
        <ChevronDown size={9} strokeWidth={4} />
        <Spacer $w={11} />
        <ArrowUp size={16} strokeWidth={2.5} />
      </NavArrows>
      <Box $w={494} $pad={4} $mr={11}>
        <Folder />
        <Crumb><ChevronRight size={10} strokeWidth={3} /><Text $ls={-0.22}>Все для дедиков</Text></Crumb>
        <Crumb><ChevronRight size={10} strokeWidth={3} /><Text $ls={-0.06}>Проверка на Конфигурации ПК</Text></Crumb>
        <BoxEnd><ChevronDown size={13} strokeWidth={3.5} /></BoxEnd>
        <RefreshBox><RotateCw size={12} strokeWidth={3} /></RefreshBox>
      </Box>
      <Box $w={98} $pad={8}>
        <Text $ls={0.14} $color={muted}>Поиск: П...</Text>
        <Spacer $w={9} />
        <svg width="12" height="12" viewBox="0 0 12 12"><circle cx="7.500" cy="4.500" r="3.300" fill="none" stroke="#35383b" strokeWidth="1.800" /><path d="M5 7L.8 11.200" stroke="#35383b" strokeWidth="2" /></svg>
      </Box>
    </NavRow>
    <Body>
      <Tree>
        <TreeRow $pad={41} $gap={6}><Drive /><Text $ls={-0.07}>Съемный диск (L:)</Text></TreeRow>
        {tree.map((item) => (
          <TreeRow key={item.name} $selected={item.selected} $pad={item.folder ? 33 : item.pad} $gap={item.folder ? 6 : item.gap}>
            {item.folder ? <Folder /> : item.icon}
            <Text $ls={item.ls}>{item.name}</Text>
          </TreeRow>
        ))}
      </Tree>
      <VScroll>
        <ChevronUp size={11} strokeWidth={4} />
        <VThumb />
        <ChevronDown size={11} strokeWidth={4} />
      </VScroll>
      <Files>
        <Columns $h={26} $mb={5}>
          <Cell $line $pad={3}><Text $color="#232d3d">Имя</Text></Cell>
          <Cell $line><Text $ls={-0.25} $color="#232d3d">Дата изменения</Text></Cell>
          <Cell $line><Text $ls={-0.3} $color="#232d3d">Тип</Text></Cell>
          <Cell><Text $ls={-0.2} $color="#232d3d">Размер</Text></Cell>
        </Columns>
        <Columns $h={22} $selected>
          <Cell $pad={4}><Vlmi shield /><Text $ls={-0.11}>DEDIC_CONFIG_v2.exe</Text></Cell>
          <Cell><Text $ls={-0.43} $color="#3d4246">19.08.2017 12:15</Text></Cell>
          <Cell><Text $ls={-0.02} $color="#3d4246">Приложение</Text></Cell>
        </Columns>
        <Columns $h={20}>
          <Cell $gap={6}><TextFile /><Text $ls={-0.13}>Инструкция.txt</Text></Cell>
          <Cell><Text $ls={-0.43} $color="#3d4246">19.08.2017 12:25</Text></Cell>
          <Cell><Text $color="#3d4246">Текстовый докум...</Text></Cell>
        </Columns>
        <HScroll>
          <ChevronLeft size={14} strokeWidth={4} />
          <HThumb />
        </HScroll>
      </Files>
    </Body>
    <Status>
      <Text $ls={-0.16} $color="#1b2c3d">Элементов: 2</Text>
      <Text $ls={-0.15} $color="#1b2c3d">Выбран 1 элемент: 113 КБ</Text>
    </Status>
    <SortMark><ChevronUp size={11} strokeWidth={2.5} /></SortMark>
  </Explorer>
);

const App = () => (
  <Desktop>
    <GlobalStyle />
    <BrowserWindow />
    <ExplorerWindow />
    <Dialog>
      <DialogTitle>Невозможно запустить это приложение на вашем ПК</DialogTitle>
      <DialogBody $size={14} $ls={-0.2} $lh={36} $color="#fff">
        Чтобы найти версию для вашего компьютера, обратитесь к издателю приложения.
      </DialogBody>
      <CloseButton>Закрыть</CloseButton>
    </Dialog>
    <Taskbar>
      <Launchers>
        <Windows />
        <TaskSearch />
        <Snip />
        <Edge />
      </Launchers>
      <Task $w={152} $mr={9} $bg="linear-gradient(to right, #0d4f20 0 55px, #15393a 55px)" $line="#0e6a2d">
        <Yandex />
        <Text $size={12} $ls={-0.3} $color="#8d9090">[Эксклюзив] Чекер д...</Text>
      </Task>
      <Task $w={152} $mr={5} $line="#4d7488">
        <TorGlobe />
        <Text $size={12} $ls={-0.28} $color="#8d9090">Conversations - Tor B...</Text>
      </Task>
      <Task $w={160} $pad={9} $bg="#04454a" $line="#4d7f8c">
        <Folder />
        <Text $size={12} $ls={-0.31} $color="#8d9090">Проверка на Конфиг...</Text>
      </Task>
      <Tray>
        <ShieldOk />
        <Spider />
        <Globe8 />
        <RedHorn />
        <Usb />
        <Volume />
        <Signal />
        <Notice />
        <Text $size={12} $color="#8c8c8c">&nbsp;РУС</Text>
        <Clock><Text $size={12} $ls={-0.52} $color="#8c8c8c">12:25</Text></Clock>
        <ShowDesktop />
      </Tray>
    </Taskbar>
  </Desktop>
);

export default App;
